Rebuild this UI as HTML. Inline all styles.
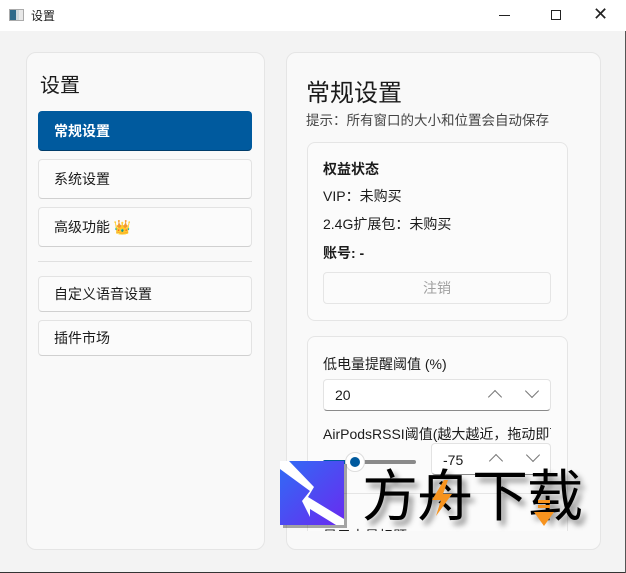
<!DOCTYPE html>
<html><head><meta charset="utf-8"><style>
*{margin:0;padding:0;box-sizing:border-box}
body{width:626px;height:573px;overflow:hidden;background:#f3f3f3;font-family:"Liberation Sans","Noto Sans CJK SC",sans-serif;color:#1b1b1b;position:relative}
.abs{position:absolute}
.title{left:0;top:0;width:626px;height:31px;background:#fff}
.panel{background:#f9f9f9;border:1px solid #e5e5e5;border-radius:10px}
.nav{left:38px;width:214px;height:40px;border:1px solid #e3e3e3;border-bottom-color:#d0d0d0;border-radius:4px;background:#fbfbfb;font-size:14px;padding-left:15px;line-height:38px}
.card{background:#fbfbfb;border:1px solid #e5e5e5;border-radius:8px}
.t14{font-size:14px}
.box{background:#fff;border:1px solid #e3e3e3;border-bottom-color:#8a8a8a;border-radius:4px}
.chev{position:absolute;width:10px;height:10px;border-left:1.3px solid #777;border-top:1.3px solid #777}
</style></head><body>
<div class="abs title"></div>
<div class="abs" style="left:9px;top:9px;width:15px;height:12px;border:1px solid #aaa;background:linear-gradient(90deg,#2f6a8a 0 45%,#cfd8dc 45% 70%,#e8e8e8 70%)"></div>
<div class="abs" style="left:31px;top:7px;font-size:12px">设置</div>
<div class="abs" style="left:499px;top:15px;width:11px;height:1px;background:#222"></div>
<div class="abs" style="left:551px;top:10px;width:10px;height:10px;border:1px solid #222"></div>
<div class="abs" style="left:593px;top:4px;font-size:18px;line-height:20px;color:#222">✕</div>

<div class="abs panel" style="left:26px;top:52px;width:239px;height:498px"></div>
<div class="abs" style="left:40px;top:69px;font-size:20px">设置</div>
<div class="abs nav" style="top:111px;background:#005a9e;border-color:#005a9e;border-bottom-color:#003c6a;color:#fff;font-weight:bold">常规设置</div>
<div class="abs nav" style="top:159px">系统设置</div>
<div class="abs nav" style="top:207px">高级功能 <span style="color:#d9a000">👑</span></div>
<div class="abs" style="left:38px;top:261px;width:214px;height:1px;background:#e0e0e0"></div>
<div class="abs nav" style="top:276px;height:36px;line-height:34px">自定义语音设置</div>
<div class="abs nav" style="top:320px;height:36px;line-height:34px">插件市场</div>

<div class="abs panel" style="left:286px;top:52px;width:315px;height:498px"></div>
<div class="abs" style="left:306px;top:73px;font-size:24px">常规设置</div>
<div class="abs" style="left:306px;top:109px;font-size:13.5px;color:#444;white-space:nowrap">提示：所有窗口的大小和位置会自动保存</div>

<div class="abs card" style="left:307px;top:142px;width:261px;height:179px"></div>
<div class="abs t14" style="left:323px;top:159px;font-weight:bold">权益状态</div>
<div class="abs t14" style="left:323px;top:186px">VIP：未购买</div>
<div class="abs t14" style="left:323px;top:214px">2.4G扩展包：未购买</div>
<div class="abs t14" style="left:323px;top:243px;font-weight:bold">账号: -</div>
<div class="abs" style="left:323px;top:272px;width:228px;height:32px;border:1px solid #e5e5e5;border-radius:4px;background:#fbfbfb;color:#a0a0a0;font-size:14px;text-align:center;line-height:30px">注销</div>

<div class="abs" style="left:307px;top:336px;width:261px;height:195px;overflow:hidden">
 <div class="abs card" style="left:0;top:0;width:261px;height:240px"></div>
 <div class="abs t14" style="left:16px;top:18px">低电量提醒阈值 (%)</div>
 <div class="abs box" style="left:16px;top:43px;width:228px;height:32px"><span class="abs t14" style="left:11px;top:7px">20</span>
  <div class="chev" style="left:166px;top:12px;transform:rotate(45deg)"></div>
  <div class="chev" style="left:203px;top:6px;transform:rotate(225deg)"></div></div>
 <div class="abs t14" style="left:16px;top:88px;width:228px;overflow:hidden;white-space:nowrap">AirPodsRSSI阈值(越大越近，拖动即可</div>
 <div class="abs" style="left:16px;top:124px;width:93px;height:4px;border-radius:2px;background:#8a8a8a"></div>
 <div class="abs" style="left:16px;top:124px;width:30px;height:4px;border-radius:2px;background:#005a9e"></div>
 <div class="abs" style="left:38px;top:116px;width:20px;height:20px;border-radius:50%;background:#fff;border:1px solid #ddd"></div>
 <div class="abs" style="left:43px;top:121px;width:10px;height:10px;border-radius:50%;background:#005a9e"></div>
 <div class="abs box" style="left:124px;top:107px;width:120px;height:32px"><span class="abs t14" style="left:11px;top:8px">-75</span>
  <div class="chev" style="left:59px;top:12px;transform:rotate(45deg)"></div>
  <div class="chev" style="left:96px;top:6px;transform:rotate(225deg)"></div></div>
 <div class="abs" style="left:16px;top:157px;width:228px;height:1px;background:#e5e5e5"></div>
 <div class="abs t14" style="left:16px;top:190px">显示电量标题</div>
</div>

<!-- watermark -->
<svg class="abs" style="left:280px;top:461px" width="68" height="68" viewBox="0 0 68 68">
<defs><linearGradient id="g" x1="0" y1="0" x2="1" y2="1"><stop offset="0" stop-color="#2f6cf5"/><stop offset="1" stop-color="#6a2af0"/></linearGradient></defs>
<rect x="3" y="3" width="64" height="64" fill="#222" opacity=".4"/>
<rect width="64" height="64" fill="url(#g)"/>
<polygon points="0,0 9,0 34,26 28,36 64,58 64,64 56,64 30,48 30,56 22,40 30,30 0,8" fill="#fff"/>
</svg>
<div class="abs" style="left:362px;top:460px;font-size:56px;line-height:66px;font-family:'Noto Sans CJK SC',sans-serif;color:#000;text-shadow:4px 5px 6px rgba(0,0,0,.45);letter-spacing:-1px;white-space:nowrap">方舟下载</div>
<svg class="abs" style="left:430px;top:480px" width="24" height="36" viewBox="0 0 24 36"><polygon points="14,0 2,20 11,20 6,36 22,14 13,14 18,0" fill="#f7931e"/></svg>
<svg class="abs" style="left:534px;top:500px" width="20" height="28" viewBox="0 0 20 28"><rect x="4" y="0" width="12" height="3" fill="#f7931e"/><rect x="4" y="5" width="12" height="3" fill="#f7931e"/><polygon points="0,12 20,12 10,26" fill="#f7931e"/></svg>

<div class="abs" style="left:0;top:572px;width:626px;height:1px;background:#333"></div>
<div class="abs" style="left:625px;top:31px;width:1px;height:542px;background:#555"></div>
</body></html>
